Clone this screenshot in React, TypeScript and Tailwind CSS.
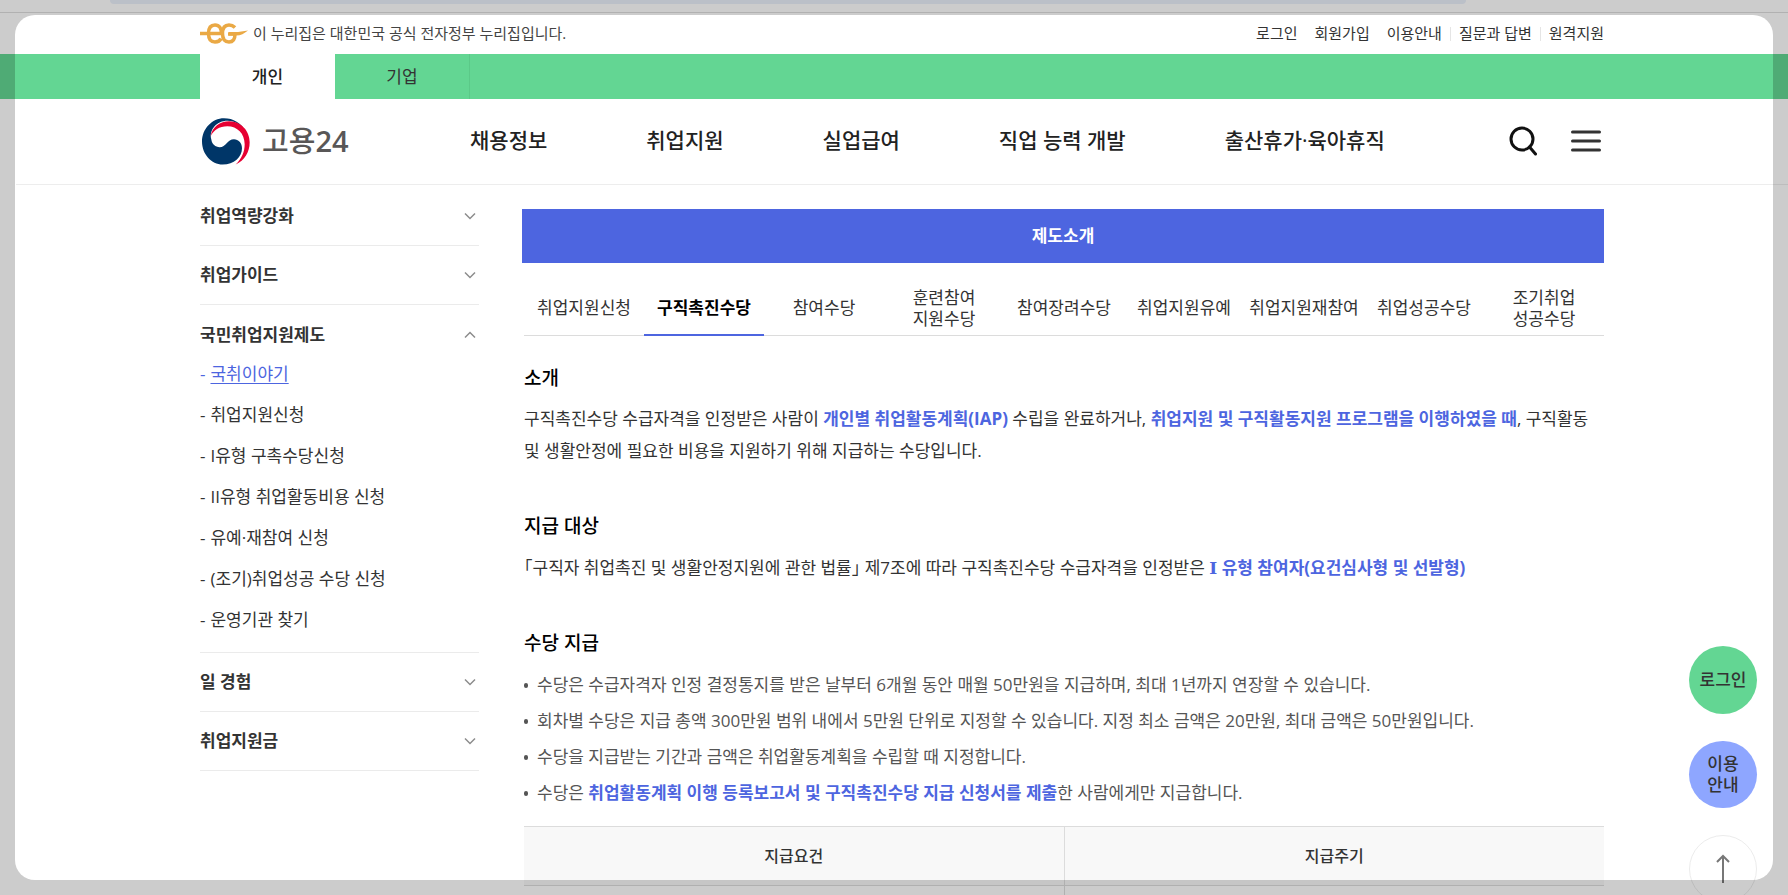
import React from 'react';

const fontStack = "font-['Open_Sans','Noto_Sans_CJK_KR',sans-serif]";

const utilLinks = ['로그인', '회원가입', '이용안내', '질문과 답변', '원격지원'];

const navItems = ['채용정보', '취업지원', '실업급여', '직업 능력 개발', '출산휴가·육아휴직'];

const sideMenu = [
  { title: '취업역량강화' },
  { title: '취업가이드' },
  {
    title: '국민취업지원제도',
    items: [
      '국취이야기',
      '취업지원신청',
      'I유형 구촉수당신청',
      'II유형 취업활동비용 신청',
      '유예·재참여 신청',
      '(조기)취업성공 수당 신청',
      '운영기관 찾기',
    ],
  },
  { title: '일 경험' },
  { title: '취업지원금' },
];

const tabs = [
  ['취업지원신청'],
  ['구직촉진수당'],
  ['참여수당'],
  ['훈련참여', '지원수당'],
  ['참여장려수당'],
  ['취업지원유예'],
  ['취업지원재참여'],
  ['취업성공수당'],
  ['조기취업', '성공수당'],
];

function EgMark() {
  return (
    <svg width="48" height="21" viewBox="0 0 48 21" fill="none" stroke="#eaa945" aria-hidden="true">
      <path d="M0 10.5H21" strokeWidth="3.5" />
      <path d="M21 11C22 5 19 2 15 2S8.500 5 8.500 10.500S11 19 15 19C18 19 20 18 21 15.500" strokeWidth="3.5" />
      <path d="M35 4.500C33 2.500 31 2 29 2C25 2 22.500 5 22.500 10.500S25 19 29 19C33 19 35 16 35 11H28" strokeWidth="3.5" />
      <path d="M29 9H38L48 7.500C44 10.500 41 12.500 36 12.500H29Z" fill="#eaa945" stroke="none" />
    </svg>
  );
}

function Emblem() {
  return (
    <svg width="48" height="47" viewBox="0 0 144 140" aria-hidden="true">
      <path
        d="M28 64C20 34 46 8 76 8C100 8 120 22 130 40C118 14 94 0 66 0C30 0 0 32 0 70S28 139 62 139C96 139 120 116 120 90C120 74 109 63 96 63C76 63 72 87 53 87C40 87 30 78 28 64Z"
        fill="#003668"
      />
      <path
        d="M26 54C30 26 54 9 82 9C118 10 143 38 143 72C143 102 128 126 101 139C120 120 128 100 128 78C128 46 106 24 76 24C52 24 34 36 26 54Z"
        fill="#e60032"
      />
    </svg>
  );
}

function Chevron({ open }: { open?: boolean }) {
  return (
    <svg width="12" height="8" viewBox="0 0 12 8" fill="none" stroke="#8c8c8c" strokeWidth="1.500" aria-hidden="true">
      <path d={open ? 'M1 6.500L6 1.500L11 6.500' : 'M1 1.500L6 6.500L11 1.500'} />
    </svg>
  );
}

function Header() {
  return (
    <header className="border-b border-[#ededed]">
      <div className="mx-auto flex h-10 max-w-[1404px] items-center justify-between pb-px text-[15px]">
        <div className="flex items-center gap-[5px] text-[#444]">
          <EgMark />
          <span>이 누리집은 대한민국 공식 전자정부 누리집입니다.</span>
        </div>
        <ul className="flex items-center text-[#333]">
          {utilLinks.map((label, i) => (
            <li key={label} className="flex items-center">
              {i > 0 && <span className={i > 2 ? 'mx-2 h-[14px] w-px bg-[#e5e5e5]' : 'w-[17px]'} />}
              <a href="#">{label}</a>
            </li>
          ))}
        </ul>
      </div>
      <div className="-ml-4 bg-[#63d693] pl-4">
        <div className="mx-auto flex h-[45px] max-w-[1404px] text-[17px]">
          <a href="#" className="flex w-[135px] items-center justify-center bg-white font-medium text-[#222]">
            개인
          </a>
          <a href="#" className="flex w-[135px] items-center justify-center border-r border-[#5bc988] text-[#333]">
            기업
          </a>
        </div>
      </div>
      <div className="mx-auto flex h-[85px] max-w-[1404px] items-center pb-px">
        <a href="#" className="flex w-[270px] items-center gap-3 pl-[2px] text-[29px] font-medium text-[#595757]">
          <Emblem />
          <span>
            고용<span className="font-semibold">24</span>
          </span>
        </a>
        <nav className="flex flex-1 gap-[99px] text-[21px] font-medium text-[#222]">
          {navItems.map((item) => (
            <a key={item} href="#">
              {item}
            </a>
          ))}
        </nav>
        <div className="flex items-center gap-[34px] pr-[3px]">
          <button type="button" aria-label="검색">
            <svg width="28" height="32" viewBox="0 0 28 32" fill="none" stroke="#111" strokeWidth="3">
              <circle cx="13" cy="14" r="11" />
              <path d="M20.500 22L26.500 29" strokeLinecap="round" />
            </svg>
          </button>
          <button type="button" aria-label="전체메뉴">
            <svg width="30" height="24" viewBox="0 0 30 24" stroke="#333" strokeWidth="3" strokeLinecap="round">
              <path d="M1.500 3H28.500M1.500 12H28.500M1.500 21H28.500" />
            </svg>
          </button>
        </div>
      </div>
    </header>
  );
}

function Sidebar() {
  return (
    <aside className="w-[279px] shrink-0 pt-[2px] text-[17px] text-[#333]">
      {sideMenu.map(({ title, items }) => (
        <section key={title} className={items ? 'border-b border-[#ebebeb] pb-3' : 'border-b border-[#ebebeb]'}>
          <button
            type="button"
            aria-expanded={!!items}
            className={`flex w-full items-center justify-between pr-[3px] font-bold ${items ? 'h-12 pt-[11px]' : 'h-[58px]'}`}
          >
            {title}
            <Chevron open={!!items} />
          </button>
          {items && (
            <ul>
              {items.map((item, i) => (
                <li key={item} className={`flex h-[41px] items-center gap-[5px] ${i === 0 ? 'text-[#4d65e0]' : ''}`}>
                  <span>-</span>
                  <a href="#" className={i === 0 ? 'underline underline-offset-3' : ''}>
                    {item}
                  </a>
                </li>
              ))}
            </ul>
          )}
        </section>
      ))}
    </aside>
  );
}

function Em({ children }: { children: React.ReactNode }) {
  return <strong className="font-bold text-[#4d65e0]">{children}</strong>;
}

function Content() {
  return (
    <main className="min-w-0 flex-1 pt-6 text-[17px] text-[#333]">
      <h1 className="flex h-[54px] items-center justify-center bg-[#4d65e0] font-bold text-white">제도소개</h1>
      <div className="pl-[2px]">
        <div role="tablist" className="mt-[18px] grid h-[55px] grid-cols-9 border-b border-[#dcdcdc]">
          {tabs.map((lines, i) => (
            <button
              key={lines.join('')}
              type="button"
              role="tab"
              aria-selected={i === 1}
              className={`-mb-px flex flex-col items-center justify-center border-b-2 leading-[21px] whitespace-nowrap ${
                i === 1 ? 'border-[#4d65e0] font-bold text-black' : 'border-transparent'
              }`}
            >
              {lines.map((line) => (
                <span key={line}>{line}</span>
              ))}
            </button>
          ))}
        </div>

        <section className="pt-7 pr-3">
          <h2 className="text-[19px] leading-7 font-medium text-black">소개</h2>
          <p className="mt-[11px] leading-8">
            구직촉진수당 수급자격을 인정받은 사람이 <Em>개인별 취업활동계획(IAP)</Em> 수립을 완료하거나,{' '}
            <Em>취업지원 및 구직활동지원 프로그램을 이행하였을 때</Em>, 구직활동 및 생활안정에 필요한 비용을 지원하기 위해
            지급하는 수당입니다.
          </p>
        </section>

        <section className="pt-[45px]">
          <h2 className="text-[19px] leading-7 font-medium text-black">지급 대상</h2>
          <p className="mt-3 leading-8">
            <span className="[font-feature-settings:'halt']">「구직자 취업촉진 및 생활안정지원에 관한 법률」</span> 제7조에
            따라 구직촉진수당 수급자격을 인정받은{' '}
            <Em>
              <span className="font-['DejaVu_Serif',serif]">Ⅰ</span> 유형 참여자(요건심사형 및 선발형)
            </Em>
          </p>
        </section>

        <section className="pt-[45px]">
          <h2 className="text-[19px] leading-7 font-medium text-black">수당 지급</h2>
          <ul className="mt-[10px] leading-9 text-[#555] [&>li]:flex [&>li]:items-center [&>li]:gap-[9px] [&>li]:before:h-[5px] [&>li]:before:w-1 [&>li]:before:rounded-full [&>li]:before:bg-[#555]">
            <li>
              <span>수당은 수급자격자 인정 결정통지를 받은 날부터 6개월 동안 매월 50만원을 지급하며, 최대 1년까지 연장할 수 있습니다.</span>
            </li>
            <li>
              <span>
                회차별 수당은 지급 총액 300만원 범위 내에서 5만원 단위로 지정할 수 있습니다. 지정 최소 금액은 20만원, 최대
                금액은 50만원입니다.
              </span>
            </li>
            <li>
              <span>수당을 지급받는 기간과 금액은 취업활동계획을 수립할 때 지정합니다.</span>
            </li>
            <li>
              <span>
                수당은 <Em>취업활동계획 이행 등록보고서 및 구직촉진수당 지급 신청서를 제출</Em>한 사람에게만 지급합니다.
              </span>
            </li>
          </ul>
        </section>

        <table className="mt-[15px] w-full table-fixed border-collapse border-t border-[#dcdcdc] text-base">
          <thead>
            <tr className="bg-[#f8f8f8]">
              <th className="h-[59px] border-r border-b border-[#dcdcdc] font-medium">지급요건</th>
              <th className="h-[59px] border-b border-[#dcdcdc] font-medium">지급주기</th>
            </tr>
          </thead>
          <tbody>
            <tr>
              <td className="h-10 border-r border-[#dcdcdc]" />
              <td />
            </tr>
          </tbody>
        </table>
      </div>
    </main>
  );
}

function QuickButtons() {
  return (
    <div className="absolute top-[646px] right-[31px] flex flex-col gap-[27px] text-[17px] leading-[21px] font-medium text-[#333]">
      <button type="button" className="h-[68px] w-[68px] rounded-full bg-[#63d693] pb-[2px]">
        로그인
      </button>
      <button type="button" className="h-[67px] w-[68px] rounded-full bg-[#8ea6ff] pb-[2px]">
        이용
        <br />
        안내
      </button>
      <button
        type="button"
        aria-label="맨 위로"
        className="flex h-[68px] w-[68px] items-center justify-center rounded-full border border-[#ececec] bg-white"
      >
        <svg width="14" height="30" viewBox="0 0 14 30" fill="none" stroke="#777" strokeWidth="2">
          <path d="M7 29V2M1 8L7 2L13 8" />
        </svg>
      </button>
    </div>
  );
}

function App() {
  return (
    <div className={`relative h-screen overflow-hidden bg-white ${fontStack}`}>
      <div className="mb-px h-[13px] border-b border-[#dedede] bg-white px-[110px]">
        <div className="mr-[212px] h-1 rounded-b-lg bg-[#eaf0fb]" />
      </div>
      <div className="pl-4">
        <div className="-ml-4 border-[#ededed] pl-4">
          <Header />
        </div>
        <div className="mx-auto flex max-w-[1404px] gap-[43px]">
          <Sidebar />
          <Content />
        </div>
      </div>
      <QuickButtons />
      <div className="pointer-events-none absolute inset-[15px] rounded-[20px] shadow-[0_0_0_40px_rgba(0,0,0,0.2)]" />
    </div>
  );
}

export default App;
